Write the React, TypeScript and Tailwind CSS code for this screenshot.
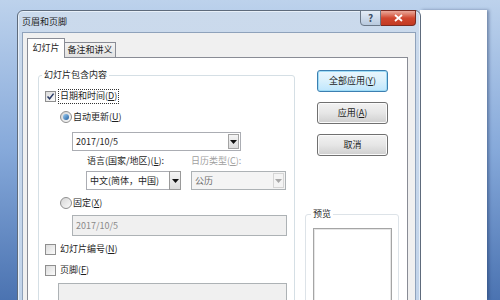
const font = "font-['Noto_Sans_CJK_SC','Noto_Sans',sans-serif]";

function CheckBox({ checked }: { checked?: boolean }) {
  return (
    <span className="w-[11px] h-[11px] border border-[#8f8f8f] bg-gradient-to-br from-[#dcdcdc] to-[#fbfbfb] flex items-center justify-center shrink-0">
      {checked && (
        <svg width="9" height="9" viewBox="0 0 9 9">
          <path d="M1.5 4.5 L3.6 6.8 L7.6 1.6" fill="none" stroke="#2a3b66" strokeWidth="1.5" />
        </svg>
      )}
    </span>
  );
}

function Radio({ checked }: { checked?: boolean }) {
  return (
    <span className="w-[12px] h-[12px] rounded-full border border-[#8f8f8f] bg-gradient-to-br from-[#d6d6d6] to-[#fafafa] flex items-center justify-center shrink-0">
      {checked && <span className="w-[6px] h-[6px] rounded-full bg-gradient-to-br from-[#9fd0f5] to-[#1f5f9e]" />}
    </span>
  );
}

function Arrow({ color }: { color: string }) {
  return (
    <svg width="7" height="4" viewBox="0 0 7 4">
      <path d="M0 0 H7 L3.5 4 Z" fill={color} />
    </svg>
  );
}

function Btn({ label, def }: { label: React.ReactNode; def?: boolean }) {
  return (
    <div
      className={
        "w-[71px] h-[22px] rounded-[3px] border flex items-center justify-center " +
        (def
          ? "border-[#3c7fb1] shadow-[inset_0_0_0_1px_#9fdcf6] bg-gradient-to-b from-[#eaf6fd] via-[#d9f0fc] to-[#bee6fd]"
          : "border-[#707070] shadow-[inset_0_0_0_1px_#fbfbfb] bg-gradient-to-b from-[#f2f2f2] via-[#e6e6e6] to-[#cfcfcf]")
      }
    >
      {label}
    </div>
  );
}

export default function App() {
  return (
    <div
      className={`relative w-[500px] h-[300px] overflow-hidden bg-gradient-to-b from-[#bdd2ec] via-[#86a9da] to-[#4b73b1] text-[9px] leading-[12px] text-[#1e1e1e] ${font}`}
    >
      {/* document behind the dialog */}
      <div className="absolute left-[420px] top-[10px] w-[67px] h-[290px] bg-white shadow-[2px_0_3px_rgba(30,50,90,0.45)]" />

      {/* dialog window */}
      <div className="absolute left-[17px] top-[10px] w-[404px] h-[300px] rounded-t-[6px] border border-[#5e6b7c] bg-gradient-to-b from-[#cbdaec] to-[#c2d4ea] shadow-[inset_0_0_0_1px_#e8f0f9] px-[4px] flex flex-col">
        {/* title bar */}
        <div className="h-[21px] flex items-start shrink-0">
          <div className="pl-[0px] pt-[5px] flex-1">页眉和页脚</div>
          <div className="flex -mt-[1px]">
            <div className="w-[21px] h-[16px] rounded-bl-[4px] border border-[#6b7888] bg-gradient-to-b from-[#e4ecf6] to-[#b8c9de] flex items-center justify-center text-[10px] font-bold text-[#3d4f66]">
              ?
            </div>
            <div className="w-[35px] h-[16px] rounded-br-[4px] border border-l-0 border-[#7a2a20] bg-gradient-to-b from-[#e9a99b] via-[#d0472f] to-[#c33a22] flex items-center justify-center">
              <svg width="9" height="8" viewBox="0 0 9 8">
                <path d="M1 1 L8 7 M8 1 L1 7" stroke="#fff" strokeWidth="1.8" />
              </svg>
            </div>
          </div>
        </div>

        {/* client area */}
        <div className="flex-1 border border-[#8fa2bb] bg-[#f0f0f0] pl-[4px] pr-[7px] pt-[5px] flex flex-col">
          {/* tabs */}
          <div className="flex items-end h-[20px] relative z-10 -mb-[1px]">
            <div className="w-[38px] h-[20px] border border-b-0 border-[#898c95] bg-white flex items-center justify-center pb-[1px]">
              幻灯片
            </div>
            <div className="w-[51px] h-[16px] border border-l-0 border-[#898c95] bg-gradient-to-b from-[#f2f2f2] to-[#e3e3e3] flex items-center justify-center">
              备注和讲义
            </div>
          </div>

          {/* tab panel */}
          <div className="flex-1 border border-[#898c95] bg-white pl-[10px] pt-[17px] flex gap-[10px]">
            {/* group: 幻灯片包含内容 */}
            <div className="relative w-[257px] h-[260px] border border-[#d5dfe5] rounded-[3px] pl-[6px] pr-[7px] flex flex-col">
              <div className="absolute left-[3px] -top-[7px] px-[2px] bg-white">幻灯片包含内容</div>

              <div className="mt-[13px] h-[14px] flex items-center gap-[2px]">
                <CheckBox checked />
                <span className="border border-dotted border-[#333] px-[1px] h-[15px] flex items-center">
                  日期和时间(<u>D</u>)
                </span>
              </div>

              <div className="mt-[7px] h-[14px] pl-[15px] flex items-center gap-[1px]">
                <Radio checked />
                <span>自动更新(<u>U</u>)</span>
              </div>

              <div className="mt-[8px] ml-[27px] w-[169px] h-[19px] border border-[#abadb3] bg-white flex items-center pl-[3px] pr-[1px]">
                <span className="flex-1">2017/10/5</span>
                <span className="w-[11px] h-[15px] border border-[#a3a3a3] bg-gradient-to-b from-[#f5f5f5] to-[#dcdcdc] flex items-center justify-center">
                  <Arrow color="#111" />
                </span>
              </div>

              <div className="mt-[3px] h-[14px] pl-[42px] flex items-center">
                <span className="w-[104px]">语言(国家/地区)(<u>L</u>):</span>
                <span className="text-[#a0a0a0]">日历类型(<u>C</u>):</span>
              </div>

              <div className="mt-[3px] pl-[41px] flex gap-[10px]">
                <div className="w-[95px] h-[19px] border border-[#abadb3] bg-white flex items-center pl-[3px]">
                  <span className="flex-1">中文(简体，中国)</span>
                  <span className="w-[12px] h-[19px] -mr-[1px] border border-[#9a9a9a] bg-gradient-to-b from-[#f5f5f5] to-[#dcdcdc] flex items-center justify-center">
                    <Arrow color="#111" />
                  </span>
                </div>
                <div className="w-[95px] h-[19px] border border-[#adb2b5] bg-[#f4f4f4] flex items-center pl-[3px] pr-[1px] text-[#6d6d6d]">
                  <span className="flex-1">公历</span>
                  <span className="w-[11px] h-[15px] border border-[#d5d5d5] bg-[#f4f4f4] flex items-center justify-center">
                    <Arrow color="#a8a8a8" />
                  </span>
                </div>
              </div>

              <div className="mt-[6px] h-[14px] pl-[15px] flex items-center gap-[1px]">
                <Radio />
                <span>固定(<u>X</u>)</span>
              </div>

              <div className="mt-[5px] ml-[27px] w-[215px] h-[21px] border border-[#adb2b5] bg-[#f0f0f0] flex items-center pl-[3px] text-[#8a8a8a]">
                2017/10/5
              </div>

              <div className="mt-[6px] h-[14px] flex items-center gap-[2px]">
                <CheckBox />
                <span className="px-[2px]">幻灯片编号(<u>N</u>)</span>
              </div>

              <div className="mt-[7px] h-[14px] flex items-center gap-[2px]">
                <CheckBox />
                <span className="px-[2px]">页脚(<u>F</u>)</span>
              </div>

              <div className="mt-[6px] ml-[13px] w-[229px] h-[30px] border border-[#adb2b5] bg-[#f0f0f0]" />
            </div>

            {/* right column */}
            <div className="w-[94px] flex flex-col -mt-[5px]">
              <div className="pl-[12px] flex flex-col gap-[10px]">
                <Btn def label={<span>全部应用(<u>Y</u>)</span>} />
                <Btn label={<span>应用(<u>A</u>)</span>} />
                <Btn label="取消" />
              </div>
              <div className="relative mt-[58px] h-[120px] border border-[#dde3e8] rounded-[3px] pl-[7px]">
                <div className="absolute left-[5px] -top-[7px] px-[2px] bg-white">预览</div>
                <div className="mt-[13px] w-[79px] h-[100px] border border-[#a5a5a5] shadow-[inset_0_0_0_1px_#e6e6e6] bg-white" />
              </div>
            </div>
          </div>
        </div>
      </div>
    </div>
  );
}
